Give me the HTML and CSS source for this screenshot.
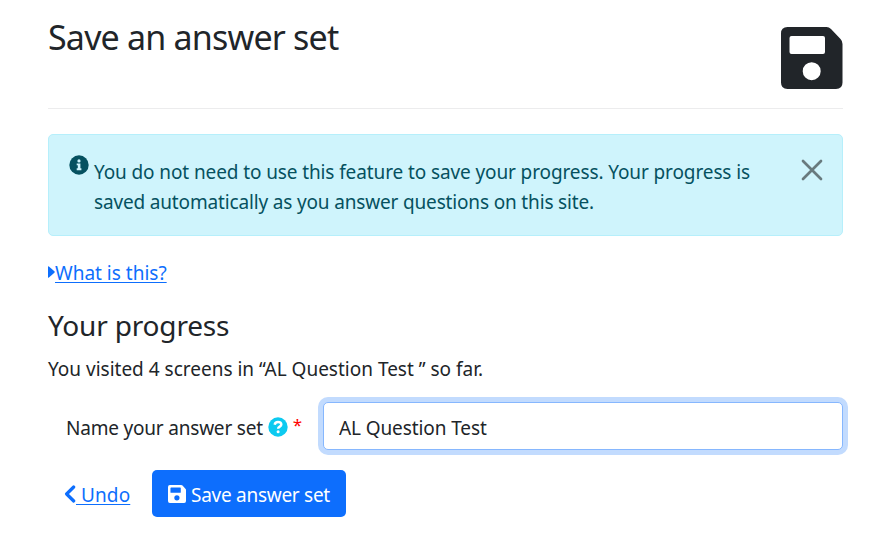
FILE: index.html
```html
<!DOCTYPE html>
<html lang="en">
<head>
<meta charset="utf-8">
<title>Save an answer set</title>
<link rel="stylesheet" href="styles.css">
</head>
<body>
<main class="page">
  <header class="header">
    <h1 class="title"><span>Save an answer set</span></h1>
    <svg class="disk" viewBox="0 0 62 62" aria-hidden="true"><path fill="currentColor" fill-rule="evenodd" d="M6.500 0H45.500Q48 0 50 2L59.500 12Q61.500 14 61.500 17V55.500Q61.500 62 55 62H6.500Q0 62 0 55.500V6.500Q0 0 6.500 0ZM10.500 9Q8.500 9 8.500 11V25Q8.500 27 10.500 27H42Q44 27 44 25V11Q44 9 42 9ZM30.700 35.200A9 9 0 1 0 30.700 53.200A9 9 0 1 0 30.700 35.200Z"/></svg>
  </header>
  <section class="alert">
    <svg class="info" viewBox="0 0 20 20" aria-hidden="true"><circle cx="10" cy="10" r="9.700" fill="currentColor"/><circle cx="10" cy="5.900" r="1.600" fill="#cff4fc"/><path d="M7.700 8.400h3.700v4.900h1v1.900H7.700v-1.900h1.100v-3H7.700z" fill="#cff4fc"/></svg>
    <p class="message"><span class="m1">You do not need to use this feature to save your progress. Your progress is</span><br><span class="m2">saved automatically as you answer questions on this site.</span></p>
    <svg class="close" viewBox="0 0 22 22" aria-label="Close"><path d="M2 2l18 18M20 2L2 20" fill="none" stroke="#687a7e" stroke-width="2.700" stroke-linecap="round"/></svg>
  </section>
  <a class="what"><svg class="caret" viewBox="0 0 7 12" aria-hidden="true"><path d="M0 .8Q0-.3.900.4L6.400 5.300Q7 6 6.400 6.700L.900 11.600Q0 12.300 0 11.200Z" fill="currentColor"/></svg><span class="link">What is this?</span></a>
  <h2 class="subtitle"><span>Your progress</span></h2>
  <p class="visited"><span>You visited 4 screens in “AL Question Test ” so far.</span></p>
  <form class="form">
    <div class="field">
      <label class="label" for="name"><span class="label-text">Name your answer set</span><svg class="help" viewBox="0 0 20 20" aria-hidden="true"><circle cx="10" cy="10" r="9.700" fill="#0dcaf0"/><path d="M6.700 7.700C7 5.700 8.300 5 10 5c1.900 0 3.300 1 3.300 2.600 0 2.100-3.200 2-3.200 4.200" fill="none" stroke="#fff" stroke-width="2.500"/><circle cx="10.100" cy="14.800" r="1.500" fill="#fff"/></svg><span class="required">*</span></label>
      <input class="input" id="name" type="text" value="AL Question Test">
    </div>
    <div class="actions">
      <a class="undo"><svg class="chevron" viewBox="0 0 12 18" aria-hidden="true"><path d="M9.700 2L2.600 9l7.100 7" fill="none" stroke="currentColor" stroke-width="3.200" stroke-linecap="round" stroke-linejoin="round"/></svg><span class="link undo-text">&nbsp;Undo</span></a>
      <button class="save" type="button"><svg class="save-icon" viewBox="0 0 62 62" aria-hidden="true"><path fill="currentColor" fill-rule="evenodd" d="M6.500 0H45.500Q48 0 50 2L60 12.500Q62 14.500 62 17V55.500Q62 62 55.500 62H6.500Q0 62 0 55.500V6.500Q0 0 6.500 0ZM10.500 9Q8.500 9 8.500 11V25Q8.500 27 10.500 27H42Q44 27 44 25V11Q44 9 42 9ZM30.700 35.200A9 9 0 1 0 30.700 53.200A9 9 0 1 0 30.700 35.200Z"/></svg><span>Save answer set</span></button>
    </div>
  </form>
</main>
</body>
</html>
```
FILE: styles.css
```css
* { box-sizing: border-box; }
body { margin: 0; background: #fff; color: #212529; font: 400 19px/30px "Noto Sans", sans-serif; overflow: hidden; }
h1, h2, p { margin: 0; font-weight: 400; white-space: nowrap; }
svg { display: block; flex: none; }
.page { width: 795px; margin-left: 48px; }
.header { height: 109px; display: flex; justify-content: space-between; border-bottom: 1px solid #ececed; }
.title { font-size: 34px; line-height: 42px; padding-top: 16px; letter-spacing: -.8px; }
.disk { width: 62px; height: 62px; margin: 27px 0 0; }
.alert { display: flex; height: 102px; margin-top: 25px; padding: 22px 19px 0 20px; border: 1px solid #b6effb; border-radius: 5px; background: #cff4fc; color: #055160; }
.info { width: 20px; height: 20px; margin-top: -2px; }
.message { flex: 1; margin-left: 5px; }
.m1 { letter-spacing: -.11px; }
.m2 { letter-spacing: -.16px; }
.close { width: 22px; height: 22px; margin-top: 2px; }
.what { display: flex; width: max-content; height: 30px; margin-top: 22px; color: #0d6efd; }
.caret { width: 7px; height: 12px; margin-top: 8px; }
.link { text-decoration: underline; text-decoration-thickness: 1px; text-underline-offset: 2px; }
.subtitle { font-size: 28px; line-height: 36px; margin-top: 19px; letter-spacing: -.17px; }
.visited { margin-top: 11px; }
.form { padding-top: 18px; }
.field { display: flex; }
.label { display: flex; width: 275px; height: 48px; padding: 11px 0 0 18px; white-space: nowrap; }
.label-text { letter-spacing: -.2px; }
.help { width: 20px; height: 20px; margin: 4px 0 0 5px; }
.required { color: #f00; margin-left: 5px; line-height: 24px; font-size: 17px; }
.input { width: 520px; height: 48px; padding: 3px 15px 0; border: 1px solid #86b7fe; border-radius: 5px; outline: 0; box-shadow: 0 0 0 5px #c2dbfe; color: #212529; font: inherit; letter-spacing: -.1px; }
.actions { display: flex; margin-top: 20px; }
.undo { display: flex; width: 104px; height: 47px; padding: 10px 0 0 16px; color: #0d6efd; }
.undo-text { letter-spacing: .1px; }
.chevron { width: 12px; height: 18px; margin-top: 5px; }
.save { display: flex; width: 194px; height: 47px; padding: 10px 0 0 16px; border: 0; border-radius: 5px; background: #0d6efd; color: #fff; font: inherit; letter-spacing: -.27px; white-space: nowrap; }
.save-icon { width: 18px; height: 18px; margin: 5px 5px 0 0; }
```
